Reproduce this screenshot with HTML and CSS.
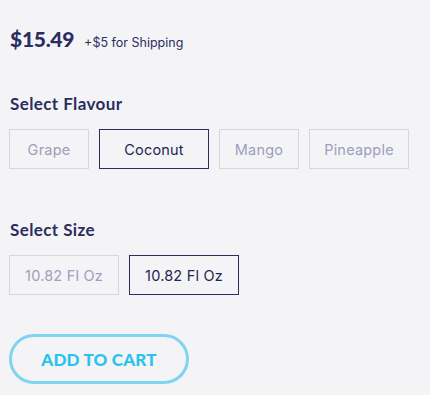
FILE: index.html
```html
<!DOCTYPE html>
<html>
<head>
<meta charset="utf-8">
<link rel="stylesheet" href="styles.css">
</head>
<body>
<div class="product">
  <div class="price-row">
    <span class="price">$15.49</span>
    <span class="shipping">+$5 for Shipping</span>
  </div>
  <div class="group">
    <h3 class="label">Select Flavour</h3>
    <div class="options">
      <button class="opt w80">Grape</button>
      <button class="opt w110 active">Coconut</button>
      <button class="opt w80">Mango</button>
      <button class="opt w100">Pineapple</button>
    </div>
  </div>
  <div class="group">
    <h3 class="label">Select Size</h3>
    <div class="options">
      <button class="opt w110">10.82 Fl Oz</button>
      <button class="opt w110 active">10.82 Fl Oz</button>
    </div>
  </div>
  <button class="cart">ADD TO CART</button>
</div>
</body>
</html>
```
FILE: styles.css
```css
html, body {
  margin: 0;
  background: #f4f4f7;
}
body {
  font-family: "Inter", "Open Sans", sans-serif;
  color: #2b2d5f;
}
.product {
  padding: 24px 9px 0 9px;
  display: flex;
  flex-direction: column;
  align-items: flex-start;
}
.price-row {
  display: flex;
  align-items: baseline;
  gap: 10px;
  padding-left: 1px;
}
.price {
  font-family: "Lato", sans-serif;
  font-weight: 900;
  font-size: 21px;
  line-height: 30px;
  letter-spacing: -0.3px;
}
.shipping {
  font-size: 12.5px;
}
.group {
  display: flex;
  flex-direction: column;
}
.label {
  margin: 0;
  font-family: "Lato", sans-serif;
  font-weight: 700;
  font-size: 17px;
  line-height: 20px;
  letter-spacing: 0.4px;
  padding-left: 1px;
}
.group:nth-of-type(2) .label { margin-top: 40px; }
.group:nth-of-type(3) .label { margin-top: 51px; }
.options {
  display: flex;
  gap: 10px;
  margin-top: 15px;
}
.opt {
  height: 40px;
  box-sizing: border-box;
  border: 1px solid #d6d6e0;
  background: transparent;
  color: #9d9fbb;
  font-family: "Inter", sans-serif;
  font-size: 14.5px;
  letter-spacing: 0.2px;
  padding: 0;
}
.opt.active {
  border-color: #2b2d5f;
  color: #23264f;
}
.w80 { width: 80px; }
.w100 { width: 100px; }
.w110 { width: 110px; }
.cart {
  margin-top: 39px;
  width: 180px;
  height: 50px;
  box-sizing: border-box;
  border: 3px solid #7fd4ef;
  border-radius: 25px;
  background: transparent;
  color: #29c3ec;
  font-family: "Lato", sans-serif;
  font-weight: 900;
  font-size: 17px;
  letter-spacing: 0.2px;
}
```
